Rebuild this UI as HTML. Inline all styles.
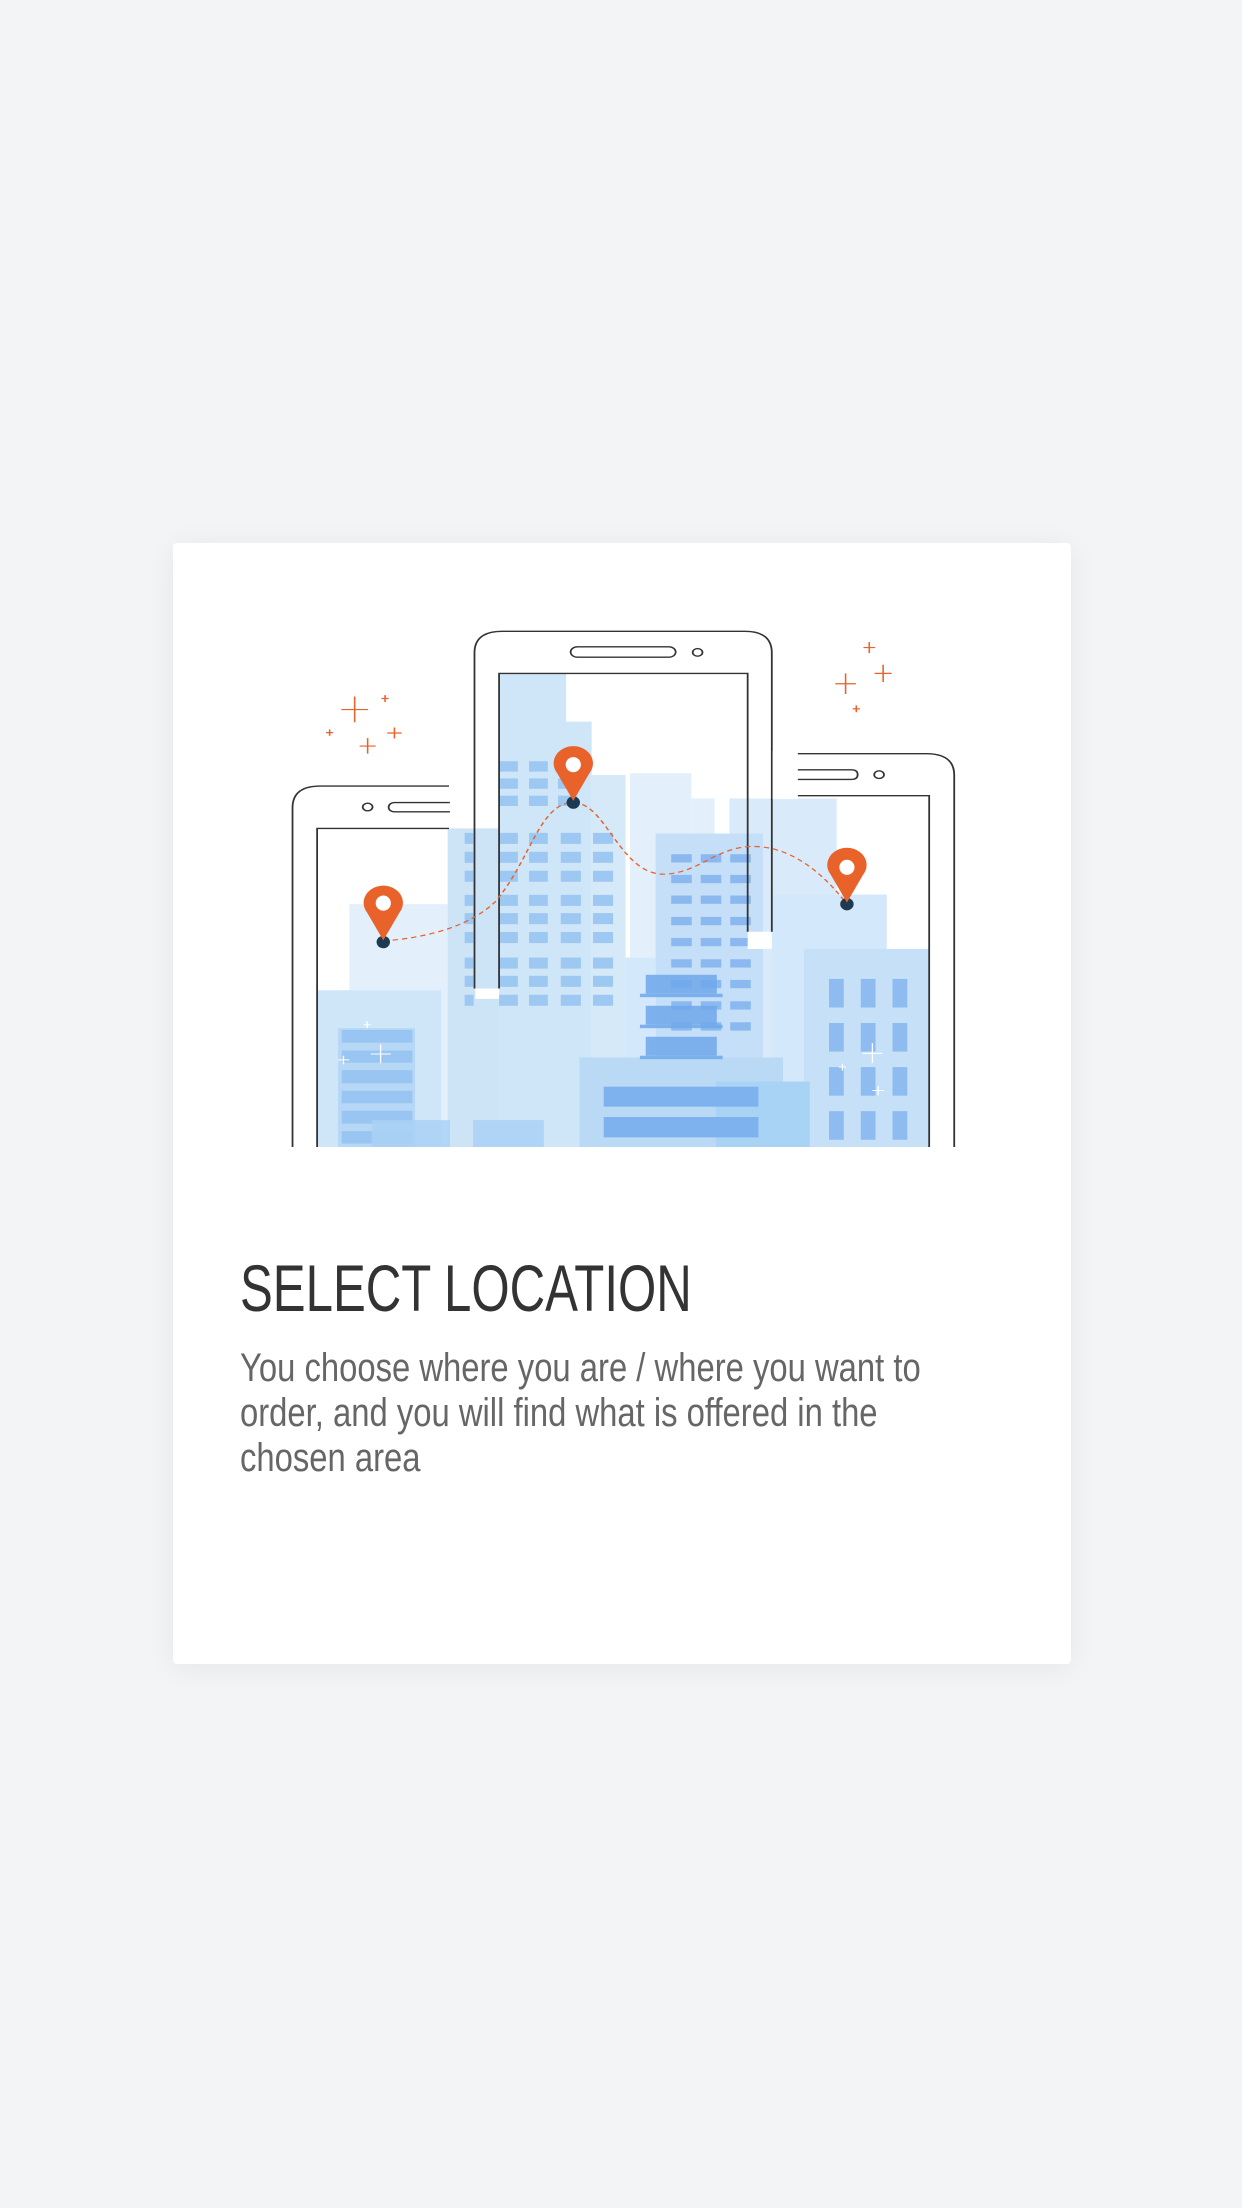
<!DOCTYPE html>
<html><head><meta charset="utf-8"><style>
html,body{margin:0;padding:0;}
body{width:1242px;height:2208px;background:#f3f4f6;position:relative;overflow:hidden;font-family:"Liberation Sans",sans-serif;}
.card{position:absolute;left:173px;top:543px;width:898px;height:1121px;background:#fff;border-radius:4px;box-shadow:0 4px 30px rgba(0,0,0,0.06);}
svg{position:absolute;left:280px;top:620px;}
h1{position:absolute;left:240px;top:1250px;margin:0;font-weight:normal;font-size:66px;color:#333;transform:scaleX(0.745);transform-origin:0 0;white-space:nowrap;}
p{position:absolute;left:240px;top:1346px;margin:0;width:865px;font-size:40px;line-height:45px;color:#666;transform:scaleX(0.82);transform-origin:0 0;}
</style></head><body>
<div class="card"></div>
<svg width="693" height="527" viewBox="0 0 1550 1530" preserveAspectRatio="none">
<rect x="85" y="605" width="293" height="925" fill="#fff"/>
<rect x="155" y="825" width="265" height="705" fill="#e3f0fb"/>
<rect x="85" y="1075" width="275" height="455" fill="#cfe5f8"/>
<rect x="375" y="605" width="115" height="925" fill="#cde4f7"/>
<rect x="490" y="155" width="150" height="145" fill="#cfe6f8"/>
<rect x="490" y="295" width="207" height="1235" fill="#cfe5f8"/>
<rect x="697" y="450" width="76" height="1080" fill="#d6e9f9"/>
<rect x="783" y="445" width="137" height="535" fill="#e3f0fb"/>
<rect x="920" y="518" width="52" height="462" fill="#e3f0fb"/>
<rect x="1005" y="518" width="240" height="1012" fill="#d9ebfa"/>
<rect x="1245" y="797" width="112" height="733" fill="#e0eefb"/>
<rect x="1100" y="797" width="257" height="733" fill="#d3e8fa"/>
<rect x="840" y="620" width="240" height="910" fill="#c4dff7"/>
<rect x="773" y="980" width="67" height="550" fill="#d3e8fa"/>
<rect x="1172" y="955" width="280" height="575" fill="#c5e0f7"/>
<rect x="670" y="1270" width="455" height="260" fill="#b9d9f5"/>
<rect x="975" y="1340" width="210" height="190" fill="#a8d3f5"/>
<g fill="#9cc8f2">
<rect x="490" y="410" width="42" height="30"/><rect x="557" y="410" width="42" height="30"/><rect x="622" y="410" width="42" height="30"/>
<rect x="490" y="460" width="42" height="30"/><rect x="557" y="460" width="42" height="30"/><rect x="622" y="460" width="42" height="30"/>
<rect x="490" y="510" width="42" height="30"/><rect x="557" y="510" width="42" height="30"/><rect x="622" y="510" width="42" height="30"/>
</g>
<g fill="#9cc8f2">
<g id="r"><rect x="413" y="618" width="20" height="32"/><rect x="490" y="618" width="42" height="32"/><rect x="557" y="618" width="42" height="32"/><rect x="628" y="618" width="45" height="32"/><rect x="700" y="618" width="45" height="32"/></g>
<use href="#r" y="55"/><use href="#r" y="110"/><use href="#r" y="180"/><use href="#r" y="233"/><use href="#r" y="288"/><use href="#r" y="362"/><use href="#r" y="415"/><use href="#r" y="470"/>
</g>
<g fill="#8ab8ef">
<g id="w"><rect x="875" y="680" width="46" height="24"/><rect x="941" y="680" width="46" height="24"/><rect x="1007" y="680" width="46" height="24"/></g>
<use href="#w" y="60"/><use href="#w" y="120"/><use href="#w" y="182"/><use href="#w" y="243"/><use href="#w" y="305"/><use href="#w" y="365"/><use href="#w" y="427"/><use href="#w" y="488"/>
</g>
<g fill="#6fa8ec" opacity="0.85">
<rect x="818" y="1030" width="159" height="55"/><rect x="805" y="1085" width="185" height="10"/>
<rect x="818" y="1120" width="159" height="55"/><rect x="805" y="1175" width="185" height="10"/>
<rect x="818" y="1210" width="159" height="55"/><rect x="805" y="1265" width="185" height="10"/>
</g>
<g fill="#8fbcf0">
<g id="c"><rect x="1228" y="1042" width="33" height="83"/><rect x="1299" y="1042" width="33" height="83"/><rect x="1370" y="1042" width="33" height="83"/></g>
<use href="#c" y="128"/><use href="#c" y="256"/><use href="#c" y="384"/>
</g>
<g fill="#7db2ee"><rect x="724" y="1355" width="346" height="58"/><rect x="724" y="1443" width="346" height="59"/></g>
<rect x="130" y="1185" width="172" height="345" fill="#b6d7f5"/>
<g fill="#98c5f2"><rect x="138" y="1190" width="158" height="37"/><rect x="138" y="1250" width="158" height="35"/><rect x="138" y="1307" width="158" height="38"/><rect x="138" y="1367" width="158" height="36"/><rect x="138" y="1425" width="158" height="37"/><rect x="138" y="1484" width="158" height="36"/></g>
<rect x="205" y="1452" width="385" height="78" fill="#a9d1f4" opacity="0.85"/>
<g stroke="#fff" stroke-width="3" fill="none"><path d="M225 1232v55M203 1260h45M195 1165v20M187 1175h16M142 1265v25M130 1277h25M1325 1228v58M1303 1258h44M1258 1288v20M1250 1298h16M1338 1352v28M1325 1366h26"/></g>
<rect x="437" y="1070" width="53" height="30" fill="#fff"/>
<rect x="1046" y="905" width="54" height="50" fill="#fff"/>
<g stroke="#333" stroke-width="4" fill="none">
<path d="M28 1530V545Q28 482 90 482H378"/>
<path d="M83 1530V605H378"/>
<rect x="243" y="530" width="160" height="27" rx="13"/>
<circle cx="196" cy="543" r="11"/>
<path d="M435 1070V95Q435 33 497 33H1040Q1100 33 1100 95V905"/>
<path d="M490 1070V155H1046V905"/>
<rect x="650" y="78" width="235" height="30" rx="15"/>
<circle cx="934" cy="94" r="11"/>
<path d="M1158 388H1445Q1508 388 1508 450V1530"/>
<path d="M1158 510H1452V1530"/>
<path d="M1158 435H1278Q1292 435 1292 449Q1292 463 1278 463H1158"/>
<circle cx="1340" cy="449" r="11"/>
</g>
<rect x="380" y="475" width="52" height="140" fill="#fff"/>
<rect x="380" y="605" width="52" height="925" fill="#cde4f7"/>
<g fill="#9cc8f2"><rect x="413" y="618" width="20" height="32"/><rect x="413" y="673" width="20" height="32"/><rect x="413" y="728" width="20" height="32"/><rect x="413" y="798" width="20" height="32"/><rect x="413" y="851" width="20" height="32"/><rect x="413" y="906" width="20" height="32"/><rect x="413" y="980" width="20" height="32"/><rect x="413" y="1033" width="20" height="32"/><rect x="413" y="1088" width="20" height="32"/></g>
<rect x="1102" y="380" width="56" height="140" fill="#fff"/>
<path d="M231 932C350 920 430 880 480 820C560 700 580 530 656 530C730 530 760 740 860 738C940 735 980 650 1070 658C1160 665 1230 760 1268 825" stroke="#e8622a" stroke-width="3.5" fill="none" stroke-dasharray="12 9"/>
<g fill="#1e3a52"><ellipse cx="656" cy="530" rx="15" ry="18"/><ellipse cx="231" cy="935" rx="15" ry="18"/><ellipse cx="1268" cy="825" rx="15" ry="18"/></g>
<g fill="#e8622a">
<path d="M656 525L620 445A44 50 0 1 1 692 445Z"/>
<path d="M231 930L195 850A44 50 0 1 1 267 850Z"/>
<path d="M1268 820L1232 740A44 50 0 1 1 1304 740Z"/>
</g>
<g fill="#fff"><ellipse cx="656" cy="420" rx="17" ry="22"/><ellipse cx="231" cy="822" rx="17" ry="22"/><ellipse cx="1268" cy="718" rx="17" ry="22"/></g>
<g stroke="#e8622a" stroke-width="3.5" fill="none">
<path d="M167 222v75M137 260h60M235 218v20M227 228h16M256 312v32M240 328h32M196 343v45M178 366h36M111 318v18M103 327h16"/>
<path d="M1318 64v32M1305 80h26M1349 130v50M1330 155h38M1265 155v60M1242 185h46M1289 248v20M1281 258h16"/>
</g>
</svg>
<h1>SELECT LOCATION</h1>
<p>You choose where you are / where you want to order, and you will find what is offered in the chosen area</p>
</body></html>
